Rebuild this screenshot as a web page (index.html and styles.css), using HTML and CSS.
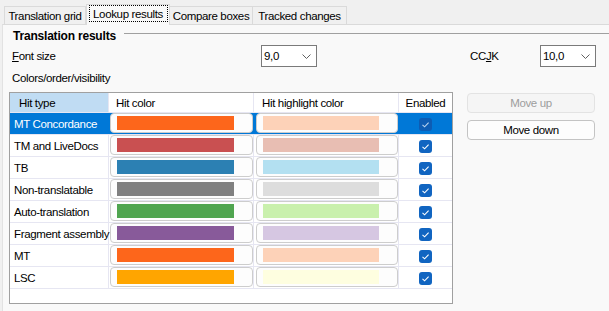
FILE: index.html
```html
<!DOCTYPE html>
<html>
<head>
<meta charset="utf-8">
<link rel="stylesheet" href="styles.css">
</head>
<body>
<div class="tabs">
  <div class="tab t1">Translation grid</div>
  <div class="tab t2 selected"><span class="focus">Lookup results</span></div>
  <div class="tab t3">Compare boxes</div>
  <div class="tab t4">Tracked changes</div>
</div>
<div class="panel">
  <div class="group-head">
    <span class="group-title">Translation results</span>
    <span class="group-line"></span>
  </div>
  <div class="font-row">
    <span class="lbl lbl-font"><u>F</u>ont size</span>
    <div class="combo"><span>9,0</span><svg class="chev" width="9" height="5" viewBox="0 0 9 5"><path d="M0.5 0.5 L4.5 4.5 L8.5 0.5" fill="none" stroke="#606060" stroke-width="1"/></svg></div>
    <span class="lbl lbl-ccjk">CC<u>J</u>K</span>
    <div class="combo"><span>10,0</span><svg class="chev" width="9" height="5" viewBox="0 0 9 5"><path d="M0.5 0.5 L4.5 4.5 L8.5 0.5" fill="none" stroke="#606060" stroke-width="1"/></svg></div>
  </div>
  <div class="lbl colors-lbl">Colors/order/visibility</div>
  <div class="main">
    <div class="grid">
      <div class="row head">
        <div class="c c1 hsel">Hit type</div>
        <div class="c c2">Hit color</div>
        <div class="c c3">Hit highlight color</div>
        <div class="c c4 center">Enabled</div>
      </div>
      <div class="row sel">
        <div class="c c1">MT Concordance</div>
        <div class="c c2"><div class="box"><div class="sw" style="background:#fd661b"></div></div></div>
        <div class="c c3"><div class="box box3"><div class="sw sw3" style="background:#fdd2b8"></div></div></div>
        <div class="c c4 center"><span class="chk"><svg width="13" height="13" viewBox="0 0 13 13"><path d="M3.5 6.8 L5.6 8.8 L9.6 4.6" fill="none" stroke="#b9d3ef" stroke-width="1.1"/></svg></span></div>
      </div>
      <div class="row">
        <div class="c c1">TM and LiveDocs</div>
        <div class="c c2"><div class="box"><div class="sw" style="background:#c95051"></div></div></div>
        <div class="c c3"><div class="box box3"><div class="sw sw3" style="background:#e8beb3"></div></div></div>
        <div class="c c4 center"><span class="chk"><svg width="13" height="13" viewBox="0 0 13 13"><path d="M3.5 6.8 L5.6 8.8 L9.6 4.6" fill="none" stroke="#ffffff" stroke-width="1.1"/></svg></span></div>
      </div>
      <div class="row">
        <div class="c c1">TB</div>
        <div class="c c2"><div class="box"><div class="sw" style="background:#2c80b3"></div></div></div>
        <div class="c c3"><div class="box box3"><div class="sw sw3" style="background:#b3e0f1"></div></div></div>
        <div class="c c4 center"><span class="chk"><svg width="13" height="13" viewBox="0 0 13 13"><path d="M3.5 6.8 L5.6 8.8 L9.6 4.6" fill="none" stroke="#ffffff" stroke-width="1.1"/></svg></span></div>
      </div>
      <div class="row">
        <div class="c c1">Non-translatable</div>
        <div class="c c2"><div class="box"><div class="sw" style="background:#808080"></div></div></div>
        <div class="c c3"><div class="box box3"><div class="sw sw3" style="background:#dddddd"></div></div></div>
        <div class="c c4 center"><span class="chk"><svg width="13" height="13" viewBox="0 0 13 13"><path d="M3.5 6.8 L5.6 8.8 L9.6 4.6" fill="none" stroke="#ffffff" stroke-width="1.1"/></svg></span></div>
      </div>
      <div class="row">
        <div class="c c1">Auto-translation</div>
        <div class="c c2"><div class="box"><div class="sw" style="background:#50a550"></div></div></div>
        <div class="c c3"><div class="box box3"><div class="sw sw3" style="background:#c9f0ad"></div></div></div>
        <div class="c c4 center"><span class="chk"><svg width="13" height="13" viewBox="0 0 13 13"><path d="M3.5 6.8 L5.6 8.8 L9.6 4.6" fill="none" stroke="#ffffff" stroke-width="1.1"/></svg></span></div>
      </div>
      <div class="row">
        <div class="c c1">Fragment assembly</div>
        <div class="c c2"><div class="box"><div class="sw" style="background:#885a9a"></div></div></div>
        <div class="c c3"><div class="box box3"><div class="sw sw3" style="background:#d6c7e2"></div></div></div>
        <div class="c c4 center"><span class="chk"><svg width="13" height="13" viewBox="0 0 13 13"><path d="M3.5 6.8 L5.6 8.8 L9.6 4.6" fill="none" stroke="#ffffff" stroke-width="1.1"/></svg></span></div>
      </div>
      <div class="row">
        <div class="c c1">MT</div>
        <div class="c c2"><div class="box"><div class="sw" style="background:#fd661b"></div></div></div>
        <div class="c c3"><div class="box box3"><div class="sw sw3" style="background:#fdd2b8"></div></div></div>
        <div class="c c4 center"><span class="chk"><svg width="13" height="13" viewBox="0 0 13 13"><path d="M3.5 6.8 L5.6 8.8 L9.6 4.6" fill="none" stroke="#ffffff" stroke-width="1.1"/></svg></span></div>
      </div>
      <div class="row">
        <div class="c c1">LSC</div>
        <div class="c c2"><div class="box"><div class="sw" style="background:#ffa500"></div></div></div>
        <div class="c c3"><div class="box box3"><div class="sw sw3" style="background:#fefee0"></div></div></div>
        <div class="c c4 center"><span class="chk"><svg width="13" height="13" viewBox="0 0 13 13"><path d="M3.5 6.8 L5.6 8.8 L9.6 4.6" fill="none" stroke="#ffffff" stroke-width="1.1"/></svg></span></div>
      </div>
    </div>
    <div class="buttons">
      <div class="btn disabled">Move up</div>
      <div class="btn">Move down</div>
    </div>
  </div>
</div>
</body>
</html>
```

FILE: styles.css
```css
html, body {
  margin: 0;
  padding: 0;
}
body {
  width: 609px;
  height: 311px;
  overflow: hidden;
  background: #f0f0f0;
  font-family: "Liberation Sans", Arial, sans-serif;
  font-size: 11.5px;
  letter-spacing: -0.35px;
  color: #000;
}
u { text-decoration: underline; text-underline-offset: 1px; }

.tabs {
  height: 24px;
  display: flex;
  align-items: flex-end;
  padding-left: 4px;
  box-sizing: border-box;
  position: relative;
  z-index: 1;
}
.tab {
  height: 18px;
  box-sizing: border-box;
  border: 1px solid #dadada;
  border-bottom: none;
  border-left: none;
  background: #f0f0f0;
  display: flex;
  align-items: center;
  justify-content: center;
  padding-top: 1px;
  white-space: nowrap;
}
.t1 { width: 82px; border-left: 1px solid #dadada; }
.t2 { width: 84px; }
.t3 { width: 83px; }
.t4 { width: 94px; }
.tab.selected {
  height: 21px;
  margin-bottom: -1px;
  background: #f9f9f9;
  border-left: 1px solid #dadada;
  padding-top: 0;
  align-items: flex-start;
}
.focus {
  border: 1px dotted #000;
  width: 79px;
  height: 17px;
  box-sizing: border-box;
  display: flex;
  align-items: center;
  justify-content: center;
}

.panel {
  height: 287px;
  box-sizing: border-box;
  background: #f9f9f9;
  border-top: 1px solid #dadada;
  margin-left: 2px;
  border-left: 1px solid #e2e2e2;
}

.group-head {
  height: 17px;
  display: flex;
  align-items: flex-start;
  padding-left: 10px;
}
.group-title {
  font-weight: bold;
  font-size: 12px;
  letter-spacing: -0.2px;
  line-height: 13px;
  margin-top: 5px;
  white-space: nowrap;
}
.group-line {
  flex: 1;
  height: 1px;
  margin-left: 8px;
  margin-top: 8px;
  background: #a0a0a0;
}

.font-row {
  display: flex;
  align-items: center;
  height: 22px;
  margin-top: 3px;
  padding-left: 9px;
}
.lbl-font { width: 249px; }
.lbl-ccjk { width: 70px; margin-left: 153px; }
.combo {
  width: 56px;
  height: 22px;
  box-sizing: border-box;
  border: 1px solid #7a7a7a;
  background: #fff;
  display: flex;
  align-items: center;
  justify-content: space-between;
  padding: 0 5px 0 2px;
}
.chev { display: block; }

.colors-lbl {
  height: 14px;
  line-height: 14px;
  margin-top: 4px;
  padding-left: 9px;
}

.main {
  display: flex;
  margin-top: 7px;
  padding-left: 6px;
}
.grid {
  width: 444px;
  height: 212px;
  box-sizing: border-box;
  border: 1px solid #a0a0a0;
  background: #fff;
}
.row {
  display: flex;
  height: 22px;
  box-sizing: border-box;
  border-bottom: 1px solid #e6e6f2;
}
.row.head { height: 20px; }
.c {
  box-sizing: border-box;
  border-right: 1px solid #e6e6f2;
  display: flex;
  align-items: center;
  white-space: nowrap;
}
.c1 { width: 99px; padding-left: 4px; }
.c2 { width: 145px; }
.c3 { width: 145px; }
.c4 { width: 53px; border-right: none; }
.center { justify-content: center; }

.head .c1 { padding-left: 9px; }
.head .c2 { padding-left: 7px; }
.head .c3 { padding-left: 8px; }
.hsel { background: #c0dcf3; }

.box {
  width: 143px;
  height: 20px;
  box-sizing: border-box;
  margin-left: 1px;
  align-self: flex-start;
  border: 1px solid #cdcdcd;
  border-radius: 4px;
  background: #fdfdfd;
  padding: 2px 0 0 6px;
}
.box3 { width: 142px; margin-left: 2px; }
.sw { width: 117px; height: 14px; }
.sw3 { width: 116px; }

.chk {
  width: 13px;
  height: 13px;
  border-radius: 3px;
  background: #1165c1;
  display: block;
  margin-top: 1px;
}
.chk svg { display: block; }

.row.sel { background: #0078d7; color: #fff; }
.row.sel .c { border-right-color: #0078d7; }
.row.sel .chk { background: #0d5cb4; }

.buttons {
  display: flex;
  flex-direction: column;
  gap: 7px;
  margin-left: 14px;
  margin-top: 1px;
}
.btn {
  width: 128px;
  height: 20px;
  box-sizing: border-box;
  border: 1px solid #c4c4c4;
  border-radius: 4px;
  background: #fdfdfd;
  display: flex;
  align-items: center;
  justify-content: center;
}
.btn.disabled {
  border-color: #e3e3e3;
  background: #f5f5f5;
  color: #9d9d9d;
}
```
